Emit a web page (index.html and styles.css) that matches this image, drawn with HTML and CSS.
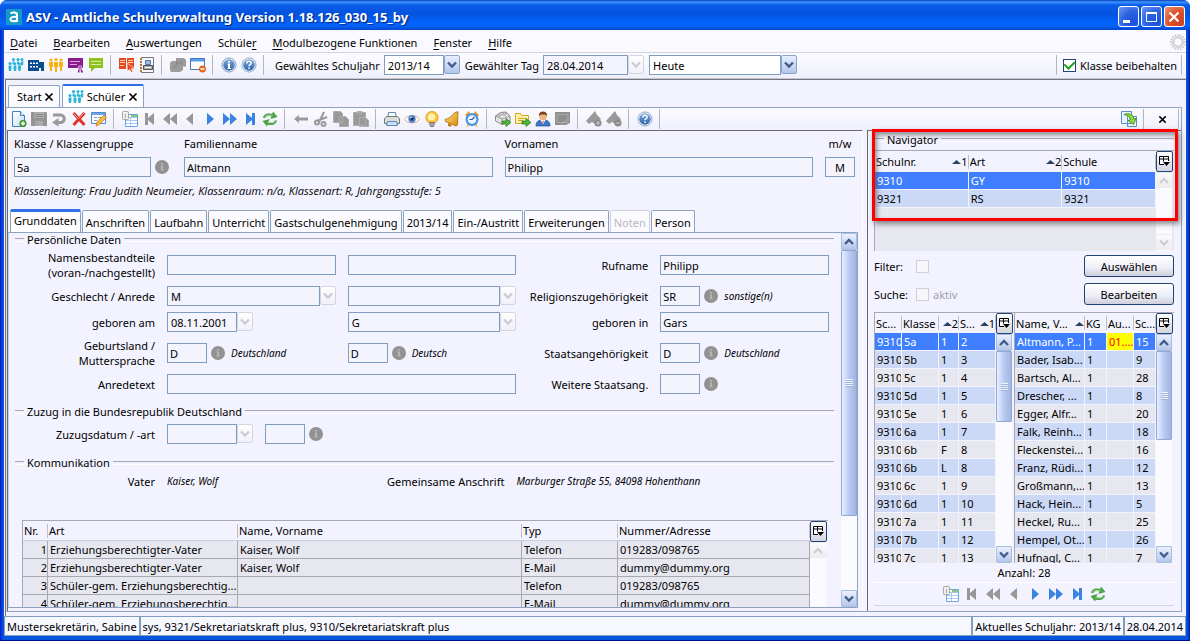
FILE: index.html
```html
<!DOCTYPE html>
<html lang="de">
<head>
<meta charset="utf-8">
<title>ASV - Amtliche Schulverwaltung</title>
<link rel="stylesheet" href="styles.css">
</head>
<body>
<svg class="defs" aria-hidden="true">
  <defs>
    <linearGradient id="badge" x1="0" y1="0" x2="0" y2="1"><stop offset="0" stop-color="#7fa9da"/><stop offset="1" stop-color="#2c62a8"/></linearGradient>
    <linearGradient id="gold" x1="0" y1="0" x2="1" y2="1"><stop offset="0" stop-color="#ffe27a"/><stop offset="1" stop-color="#d98a10"/></linearGradient>
    <linearGradient id="paper" x1="0" y1="0" x2="1" y2="1"><stop offset="0" stop-color="#fff"/><stop offset="1" stop-color="#c4ddf5"/></linearGradient>
  </defs>
  <symbol id="people" viewBox="0 0 16 16"><g fill="currentColor"><circle cx="5.500" cy="2.500" r="1.500"/><circle cx="10" cy="2.500" r="1.500"/><circle cx="14" cy="2.500" r="1.500"/><path d="M4.500 4.500h2v3h-2zM9 4.500h2v3H9zM13 4.500h2.500l-.5 4h-2z"/><circle cx="2" cy="6.500" r="1.500"/><circle cx="7" cy="6.800" r="1.400"/><circle cx="11.500" cy="6.800" r="1.400"/><path d="M.5 8.500h3V11L3 14H1L.5 11zM5.500 8.500h3V11L8 14H6l-.5-3zM10 8.500h3V11l-.5 3h-2l-.5-3z"/></g></symbol>
  <symbol id="crowd" viewBox="0 0 16 16"><g fill="#f5b414"><circle cx="3" cy="3" r="1.600"/><circle cx="8" cy="2.500" r="1.600"/><circle cx="13" cy="3" r="1.600"/><path d="M1 5h4v5H4v4H2v-4H1zM6 5h4v5H9v5H7v-5H6zM11 5h4v5h-1v4h-2v-4h-1z"/></g></symbol>
  <symbol id="school" viewBox="0 0 16 16"><path fill="#0b4b8f" d="M0 3h11v2h5v9h-3v-3h-2v3H0z"/><path fill="#fff" d="M2 5.500h2v1.500H2zM5 5.500h2v1.500H5zM8 5.500h2v1.500H8zM2 9h2v1.500H2zM5 9h2v1.500H5zM8 9h2v1.500H8z"/></symbol>
  <symbol id="note" viewBox="0 0 16 16"><path fill="#8c1a8c" d="M0 1h15v10H0z"/><path stroke="#d9a6d9" d="M2 4.500h10M2 7.500h7"/><circle cx="12" cy="10.500" r="2" fill="#b45fb4" stroke="#e8cbe8" stroke-width=".6"/><path fill="#8c1a8c" d="M10 12.500h1.500v3H10zM12.500 12.500H14l1 3h-2z"/></symbol>
  <symbol id="speech" viewBox="0 0 16 16"><path fill="#8dc21f" d="M1 1h14v10H7l-4 4v-4H1z"/><path stroke="#d8efa8" d="M3 4.500h10M3 7.500h10"/></symbol>
  <symbol id="book" viewBox="0 0 16 16"><path fill="#e44a1e" d="M0 1h7v11H0zM8 1h7v11H8z"/><path stroke="#ffd0b8" d="M1 3.500h5M1 5.500h5M1 8.500h4M9 3.500h5M9 5.500h5"/><path fill="#e44a1e" stroke="#fff" stroke-width=".6" d="M8 6l7 5-3 .5 2 3-1.500 1-2-3-2 2z"/></symbol>
  <symbol id="binder" viewBox="0 0 16 16"><path fill="#f8f8f8" stroke="#777" d="M2.500.5h12v15h-12z"/><path fill="#b07a3a" d="M1 1h2v14H1z"/><path stroke="#eee" d="M0 3.500h3M0 6.500h3M0 9.500h3M0 12.500h3"/><path fill="#9dbbe6" stroke="#5577aa" d="M6.500 3.500h5v4h-5z"/><path fill="#aaa" stroke="#555" d="M4.500 8.500h9v4h-9z"/><path stroke="#fff" d="M6 10.500h6"/></symbol>
  <symbol id="pages" viewBox="0 0 16 16"><path fill="#9b9b9b" d="M6 1h8l2 2v6l-2 1-1-1v4l-3 2H1l-1-2V6l2-2h4z"/><path stroke="#858585" fill="none" d="M6 6h7M7 4v4l-4 3M10 3l3 3"/></symbol>
  <symbol id="winminus" viewBox="0 0 16 16"><path fill="#fff" stroke="#3c7ac8" d="M.5 1.500h14v11H.5z"/><path fill="#5d9be6" d="M1 2h13v2.500H1z"/><circle cx="12.500" cy="12" r="3.500" fill="#e8681b"/><path stroke="#fff" stroke-width="1.400" d="M10.500 12h4"/></symbol>
  <symbol id="info" viewBox="0 0 16 16"><circle cx="8" cy="8" r="7" fill="#fff" stroke="#7d9cc4"/><circle cx="8" cy="8" r="5.800" fill="url(#badge)"/><path fill="#fff" d="M7 4h2v1.600H7zM6.500 6.500H9V11h1v1H6.500v-1H7V7.500h-.5z"/></symbol>
  <symbol id="help" viewBox="0 0 16 16"><circle cx="8" cy="8" r="7" fill="#fff" stroke="#8aa8cf"/><circle cx="8" cy="8" r="5.800" fill="url(#badge)"/><path fill="none" stroke="#fff" stroke-width="1.500" d="M5.800 6.500C5.800 3.500 10.300 3.800 10.200 6.200 10.100 7.600 8 7.700 8 9.300"/><path fill="#fff" d="M7.200 10.500h1.600v1.500H7.200z"/></symbol>
  <symbol id="infogray" viewBox="0 0 14 14"><circle cx="7" cy="7" r="7" fill="#929292"/><path fill="#b5b5b5" d="M6 3h2v1.500H6zM5.500 5.500H8v4h1v1H5.500v-1H6v-3h-.5z"/></symbol>
  <symbol id="newdoc" viewBox="0 0 16 16"><path fill="url(#paper)" stroke="#3f7fc0" d="M1.500.5h8l4 4v11h-12z"/><path fill="#e6f3ff" stroke="#3f7fc0" d="M9.500.5v4h4"/><circle cx="12" cy="12.500" r="3.300" fill="#49a535" stroke="#2d7a20" stroke-width=".6"/><path stroke="#fff" stroke-width="1.300" d="M12 10.500v4M10 12.500h4"/></symbol>
  <symbol id="save" viewBox="0 0 16 16"><path fill="#949494" d="M0 1h15l1 1v13H0z"/><path fill="#adadad" d="M3 1h10v6H3zM4 10h8v5H4z"/><path stroke="#8a8a8a" d="M4 3.500h8M4 5.500h8M6 11v3"/></symbol>
  <symbol id="undo" viewBox="0 0 16 16"><path fill="none" stroke="#999" stroke-width="3" d="M2 4h7.500a3.700 3.700 0 0 1 0 7.500H6"/><path fill="#999" d="M7.500 7v8.500L1 11.500z"/></symbol>
  <symbol id="delete" viewBox="0 0 16 16"><path stroke="#e0332e" stroke-width="3" d="M2.500 2l11 12M13.500 2l-11 12"/><path stroke="#f9928c" d="M2.500 2.500l5 5M13 2L8 7"/></symbol>
  <symbol id="edit" viewBox="0 0 16 16"><path fill="#fff" stroke="#4d87cc" d="M.5 1.500h14v11H.5z"/><path fill="#6ea5e6" d="M1 2h13v2H1z"/><path stroke="#7f9cc0" d="M3 6.500h3M3 9.500h3M7 6.500h5"/><path fill="#f6b83d" stroke="#b9761a" stroke-width=".7" d="M5 15l1-4 7-7 2.500 2.500-7 7z"/></symbol>
  <symbol id="list" viewBox="0 0 16 16"><path fill="#fff" stroke="#6fa4d8" d="M3.500 3.500h12v12h-12z"/><path stroke="#a6c8ea" d="M4 6.500h11M4 9.500h11M4 12.500h11M8.500 6v9"/><path stroke="#8cc878" stroke-width="2" d="M9 5h6"/><rect x=".5" y=".5" width="6" height="8" rx="1" fill="#eee" stroke="#a5a5a5"/><path stroke="#aaa" d="M3.500 3v4"/></symbol>
  <symbol id="first" viewBox="0 0 16 16"><path fill="currentColor" d="M3 2h3v5l6-5v12L6 9v5H3z"/></symbol>
  <symbol id="last" viewBox="0 0 16 16"><path fill="currentColor" d="M13 2h-3v5L4 2v12l6-5v5h3z"/></symbol>
  <symbol id="rew" viewBox="0 0 16 16"><path fill="currentColor" d="M8 2v12L1 8zM15 2v12L8 8z"/></symbol>
  <symbol id="ff" viewBox="0 0 16 16"><path fill="currentColor" d="M8 2v12l7-6zM1 2v12l7-6z"/></symbol>
  <symbol id="prev" viewBox="0 0 16 16"><path fill="currentColor" d="M11 2v12L4 8z"/></symbol>
  <symbol id="next" viewBox="0 0 16 16"><path fill="currentColor" d="M5 2v12l7-6z"/></symbol>
  <symbol id="refresh" viewBox="0 0 16 16"><path fill="none" stroke="#4aa345" stroke-width="2.600" d="M2 7c1-3.500 5-4 9-2.500M14 9.500c-1 3.500-5 4-9 2.500"/><path fill="#4aa345" d="M11 .5l4.500 5.500-7 2zM5 15.500L.5 10l7-2z"/><path fill="none" stroke="#b9e5b0" stroke-width=".9" d="M2.500 6.500C4 4 8 4.200 10.500 5M13.500 9.800c-1.500 2.500-5.500 2.200-8 1.400"/></symbol>
  <symbol id="back" viewBox="0 0 16 16"><path fill="#999" d="M1 8l5-4v2.500h9v3H6V12z"/></symbol>
  <symbol id="cut" viewBox="0 0 16 16"><path stroke="#999" stroke-width="2" d="M11 1L6 11M14 6L4 10"/><g fill="none" stroke="#999" stroke-width="2"><circle cx="4" cy="11.500" r="2"/><circle cx="10.500" cy="13" r="2"/></g></symbol>
  <symbol id="copy" viewBox="0 0 16 16"><path fill="#999" stroke="#adadad" d="M.5.5h7l2 2v9h-9zM6.500 5.500h6l3 3v7h-9z"/></symbol>
  <symbol id="paste" viewBox="0 0 16 16"><path fill="#999" stroke="#adadad" d="M.5 1.500h12v13H.5zM4 .5h5v3H4zM6.500 6.500h6l3 3v6h-9z"/></symbol>
  <symbol id="print" viewBox="0 0 16 16"><path fill="#fff" stroke="#5c87b5" d="M4.500 1.500h7l1 6h-9z"/><path fill="#dcdcdc" stroke="#777" d="M.5 7.500l2-2h11l2 2v5H.5z"/><path fill="#c9e0fa" stroke="#5c87b5" d="M3.500 10.500h9l1 4h-11z"/></symbol>
  <symbol id="eye" viewBox="0 0 16 16"><path fill="#fff" stroke="#dda888" d="M.5 8.500C4 3 12 3 15.500 8.500 12 13 4 13 .5 8.500z"/><circle cx="8" cy="8" r="3.700" fill="#4d86cf"/><circle cx="8" cy="8" r="1.700" fill="#15305c"/><circle cx="7" cy="6.500" r=".8" fill="#fff"/></symbol>
  <symbol id="bulb" viewBox="0 0 16 16"><circle cx="8" cy="6.500" r="6" fill="#ffc83d" stroke="#e09d28"/><circle cx="7.500" cy="6" r="3.500" fill="#fff3b5"/><path fill="#aaa" stroke="#777" d="M5.500 11.500h5l-1 4h-3z"/></symbol>
  <symbol id="bell" viewBox="0 0 16 16"><path fill="url(#gold)" stroke="#a8680c" stroke-width=".8" d="M14 .8C11 1 10 2 8 4.500 6 7 4 7.500 1 8.500l.5 2L12 15l1.500-1z"/><path fill="#c9790f" d="M4 12l4 2-1.500 1.800L4 15z"/></symbol>
  <symbol id="clock" viewBox="0 0 16 16"><path fill="#e09a2d" d="M1 4l4-4 1 3-3 3zM15 4l-4-4-1 3 3 3zM3 13l2 1-2 2zM13 13l-2 1 2 2z"/><circle cx="8" cy="8.500" r="6.500" fill="#4b93da"/><circle cx="8" cy="8.500" r="4.300" fill="#eef7ff"/><path fill="none" stroke="#2a5d99" stroke-width="1.200" d="M10.500 6L8 8.500H5.500"/></symbol>
  <symbol id="export" viewBox="0 0 16 16"><path fill="#e4e4e4" stroke="#8c8c8c" d="M.5 5l5-3.500L11 1l4 4v5l-8 3.500L.5 10z"/><path stroke="#999" fill="none" d="M.5 5L7 8l8-3M7 8v5"/><path fill="#fff" stroke="#999" d="M3 3h3v2H3zM8 2h3v2H8z"/><path fill="#4fb53a" stroke="#27771a" stroke-width=".7" d="M7 10h4V7.500l5 4-5 4V13H7z"/></symbol>
  <symbol id="folder" viewBox="0 0 16 16"><path fill="#fff1a8" stroke="#d9a520" d="M.5 2.500h5l1 2h7v8H.5z"/><path stroke="#d9a520" d="M3 7.500h8M3 9.500h5"/><path fill="#4fb53a" stroke="#27771a" stroke-width=".7" d="M7 10h4V7.500l5 4-5 4V13H7z"/></symbol>
  <symbol id="person" viewBox="0 0 16 16"><path fill="#3c77c9" stroke="#214f94" stroke-width=".7" d="M1 15c0-5 3-6 7-6s7 1 7 6z"/><path fill="#fff" d="M5.500 9h5L8 13.500z"/><path fill="#c6372e" d="M7.300 10h1.400L8 14z"/><circle cx="8" cy="5.500" r="3.700" fill="#eeb583"/><path fill="#7a4316" d="M3.800 5C3.500-1 12.500-1 12.200 5L10 3.500H6z"/></symbol>
  <symbol id="editgray" viewBox="0 0 16 16"><path fill="#8f8f8f" d="M0 1h15v11l-4 2H0z"/><path stroke="#aaa" fill="none" d="M2 3.500h11v8H2zM6 14l8-8"/></symbol>
  <symbol id="tagplus" viewBox="0 0 16 16"><path fill="#999" d="M0 10L9 0l2 4 4 4-2 2-4 3-3-2-3 2z"/><circle cx="12" cy="12" r="3.500" fill="#8a8a8a"/><path stroke="#ccc" d="M10 12h4M12 10v4"/></symbol>
  <symbol id="tagminus" viewBox="0 0 16 16"><path fill="#999" d="M0 10L9 0l2 4 4 4-2 2-4 3-3-2-3 2z"/><circle cx="12" cy="12" r="3.500" fill="#8a8a8a"/><path stroke="#ccc" d="M10 12h4"/></symbol>
  <symbol id="swap" viewBox="0 0 16 16"><path fill="#e8f3ff" stroke="#5b8fc7" d="M.5.500h10v12H.500zM6.500 5.500h9v10h-9z"/><path fill="#8fdc3c" stroke="#2f7d14" stroke-width=".8" d="M3 3.500C8 1.500 12.500 3.500 12.800 8L15 7.500l-2.500 6-5.500-4 2.500-.8C9 6 7 4.500 3 3.500z"/></symbol>
  <symbol id="x" viewBox="0 0 10 10"><path stroke="#000" stroke-width="1.700" d="M1.500 1.500l7 7M8.500 1.500l-7 7"/></symbol>
  <symbol id="down" viewBox="0 0 10 8"><path fill="none" stroke="currentColor" stroke-width="2.400" d="M1 1.500l4 4 4-4"/></symbol>
  <symbol id="up" viewBox="0 0 10 8"><path fill="none" stroke="currentColor" stroke-width="2.400" d="M1 6l4-4 4 4"/></symbol>
  <symbol id="sort" viewBox="0 0 9 5"><path fill="#29435e" d="M0 5l4.500-4L9 5z"/></symbol>
  <symbol id="cols" viewBox="0 0 11 11"><path fill="#fff" stroke="#000" d="M9.500 5V.5h-9v8H5M.5 3h9M4.500.5v5"/><path fill="#000" d="M4 6h7l-3.500 4z"/></symbol>
  <symbol id="spin" viewBox="0 0 16 16"><g stroke="#c8c8c8" stroke-width="1.300"><path d="M8 0v4.500M8 11.500V16M0 8h4.500M11.500 8H16M2.300 2.300l3.200 3.200M10.500 10.500l3.200 3.200M13.700 2.300l-3.200 3.200M5.500 10.500l-3.200 3.200M5 .6l1.700 4M9.300 11.400l1.700 4M11 .6l-1.700 4M6.700 11.400l-1.700 4M.6 5l4 1.700M11.400 9.300l4 1.700M.6 11l4-1.700M11.400 6.700l4-1.700"/></g></symbol>
</svg>

<div class="window">
  <header class="titlebar">
    <svg class="logo" viewBox="0 0 16 16"><rect width="16" height="16" fill="#1599c6"/><path fill="none" stroke="#fff" stroke-width="2" d="M4.500 4.500c2-1.500 6.500-1.500 6.500 1.500v7M11 8C7 7.500 4.500 8 4.500 10.200S9 13 11 11"/></svg>
    <h1>ASV - Amtliche Schulverwaltung Version 1.18.126_030_15_by</h1>
    <button class="winbtn" aria-label="Minimieren"><svg viewBox="0 0 18 18"><path stroke="#fff" stroke-width="3" d="M4 13.500h7"/></svg></button>
    <button class="winbtn" aria-label="Maximieren"><svg viewBox="0 0 18 18"><path fill="none" stroke="#fff" d="M4.500 4.500h10v9h-10z"/><path stroke="#fff" stroke-width="2" d="M4 5h11"/></svg></button>
    <button class="winbtn close" aria-label="Schließen"><svg viewBox="0 0 18 18"><path stroke="#fff" stroke-width="2.200" d="M4.500 4.500l9 9M13.500 4.500l-9 9"/></svg></button>
  </header>

  <div class="client">
    <nav class="menubar">
      <a href="#"><u>D</u>atei</a><a href="#"><u>B</u>earbeiten</a><a href="#"><u>A</u>uswertungen</a><a href="#">Schüle<u>r</u></a><a href="#"><u>M</u>odulbezogene Funktionen</a><a href="#"><u>F</u>enster</a><a href="#"><u>H</u>ilfe</a>
      <svg class="icon spinner"><use href="#spin"/></svg>
    </nav>

    <div class="toolbar main-tools">
      <button class="tool cyan" aria-label="Schüler"><svg class="icon"><use href="#people"/></svg></button>
      <button class="tool" aria-label="Schule"><svg class="icon"><use href="#school"/></svg></button>
      <button class="tool" aria-label="Klassen"><svg class="icon"><use href="#crowd"/></svg></button>
      <button class="tool" aria-label="Lehrer"><svg class="icon"><use href="#note"/></svg></button>
      <button class="tool" aria-label="Unterricht"><svg class="icon"><use href="#speech"/></svg></button>
      <i class="sep"></i>
      <button class="tool" aria-label="Berichte"><svg class="icon"><use href="#book"/></svg></button>
      <button class="tool" aria-label="Drucken"><svg class="icon"><use href="#binder"/></svg></button>
      <i class="sep"></i>
      <button class="tool" aria-label="Fenster"><svg class="icon"><use href="#pages"/></svg></button>
      <button class="tool" aria-label="Fenster schließen"><svg class="icon"><use href="#winminus"/></svg></button>
      <i class="sep"></i>
      <button class="tool" aria-label="Info"><svg class="icon"><use href="#info"/></svg></button>
      <button class="tool" aria-label="Hilfe"><svg class="icon"><use href="#help"/></svg></button>
      <i class="sep"></i>
      <label class="tool-label" for="year">Gewähltes Schuljahr</label>
      <span class="combo active year"><select id="year"><option>2013/14</option></select><span class="arrow"><svg><use href="#down"/></svg></span></span>
      <label class="tool-label" for="day">Gewählter Tag</label>
      <span class="combo day"><input id="day" value="28.04.2014" readonly><button class="arrow" aria-label="Tag wählen" disabled><svg><use href="#down"/></svg></button></span>
      <span class="combo active today"><select aria-label="Tag"><option>Heute</option></select><span class="arrow"><svg><use href="#down"/></svg></span></span>
      <span class="grow"></span>
      <i class="sep"></i>
      <label class="keep"><input type="checkbox" class="check" checked>Klasse beibehalten</label>
      <i class="sep"></i>
    </div>

    <main class="workspace">
      <div class="doc-tabs">
        <button class="doc-tab">Start<svg><use href="#x"/></svg></button>
        <button class="doc-tab current"><svg class="icon cyan"><use href="#people"/></svg>Schüler<svg><use href="#x"/></svg></button>
      </div>
      <div class="frame">
        <div class="toolbar sub-tools">
          <button class="tool" aria-label="Neu"><svg class="icon"><use href="#newdoc"/></svg></button>
          <button class="tool" aria-label="Speichern"><svg class="icon"><use href="#save"/></svg></button>
          <button class="tool" aria-label="Rückgängig"><svg class="icon"><use href="#undo"/></svg></button>
          <button class="tool" aria-label="Löschen"><svg class="icon"><use href="#delete"/></svg></button>
          <button class="tool" aria-label="Ändern"><svg class="icon"><use href="#edit"/></svg></button>
          <i class="sep"></i>
          <button class="tool" aria-label="Liste"><svg class="icon"><use href="#list"/></svg></button>
          <button class="tool gray" aria-label="Erster"><svg class="icon"><use href="#first"/></svg></button>
          <button class="tool gray" aria-label="Seite zurück"><svg class="icon"><use href="#rew"/></svg></button>
          <button class="tool gray" aria-label="Zurück"><svg class="icon"><use href="#prev"/></svg></button>
          <button class="tool blue" aria-label="Weiter"><svg class="icon"><use href="#next"/></svg></button>
          <button class="tool blue" aria-label="Seite vor"><svg class="icon"><use href="#ff"/></svg></button>
          <button class="tool blue" aria-label="Letzter"><svg class="icon"><use href="#last"/></svg></button>
          <button class="tool" aria-label="Aktualisieren"><svg class="icon"><use href="#refresh"/></svg></button>
          <i class="sep"></i>
          <button class="tool" aria-label="Voriges"><svg class="icon"><use href="#back"/></svg></button>
          <button class="tool" aria-label="Ausschneiden"><svg class="icon"><use href="#cut"/></svg></button>
          <button class="tool" aria-label="Kopieren"><svg class="icon"><use href="#copy"/></svg></button>
          <button class="tool" aria-label="Einfügen"><svg class="icon"><use href="#paste"/></svg></button>
          <i class="sep"></i>
          <button class="tool" aria-label="Drucken"><svg class="icon"><use href="#print"/></svg></button>
          <button class="tool" aria-label="Vorschau"><svg class="icon"><use href="#eye"/></svg></button>
          <button class="tool" aria-label="Hinweis"><svg class="icon"><use href="#bulb"/></svg></button>
          <button class="tool" aria-label="Erinnerung"><svg class="icon"><use href="#bell"/></svg></button>
          <button class="tool" aria-label="Wecker"><svg class="icon"><use href="#clock"/></svg></button>
          <i class="sep"></i>
          <button class="tool" aria-label="Export"><svg class="icon"><use href="#export"/></svg></button>
          <button class="tool" aria-label="Ordner"><svg class="icon"><use href="#folder"/></svg></button>
          <button class="tool" aria-label="Person"><svg class="icon"><use href="#person"/></svg></button>
          <button class="tool" aria-label="Bearbeiten"><svg class="icon"><use href="#editgray"/></svg></button>
          <i class="sep"></i>
          <button class="tool" aria-label="Merkmal hinzufügen"><svg class="icon"><use href="#tagplus"/></svg></button>
          <button class="tool" aria-label="Merkmal entfernen"><svg class="icon"><use href="#tagminus"/></svg></button>
          <i class="sep"></i>
          <button class="tool" aria-label="Hilfe"><svg class="icon"><use href="#help"/></svg></button>
          <i class="sep"></i>
          <span class="grow"></span>
          <button class="tool" aria-label="Wechseln"><svg class="icon"><use href="#swap"/></svg></button>
          <i class="sep"></i>
          <button class="tool close-doc" aria-label="Schließen"><svg><use href="#x"/></svg></button>
          <i class="sep"></i>
        </div>

        <div class="split">
          <section class="editor">
            <div class="student">
              <div class="field"><label for="klasse">Klasse / Klassengruppe</label><span class="with-info class-box"><input class="box grow" id="klasse" value="5a" readonly><svg class="info"><use href="#infogray"/></svg></span></div>
              <div class="field"><label for="fam">Familienname</label><input class="box" id="fam" value="Altmann" readonly></div>
              <div class="field"><label for="vor">Vornamen</label><input class="box" id="vor" value="Philipp" readonly></div>
              <div class="field sex"><label for="mw">m/w</label><input class="box" id="mw" value="M" readonly></div>
            </div>
            <p class="class-note">Klassenleitung: Frau Judith Neumeier, Klassenraum: n/a, Klassenart: R, Jahrgangsstufe: 5</p>
            <div class="tabs">
              <button class="tab current">Grunddaten</button><button class="tab">Anschriften</button><button class="tab">Laufbahn</button><button class="tab">Unterricht</button><button class="tab">Gastschulgenehmigung</button><button class="tab">2013/14</button><button class="tab">Ein-/Austritt</button><button class="tab">Erweiterungen</button><button class="tab" disabled>Noten</button><button class="tab">Person</button>
            </div>
            <div class="tab-panel">
              <div class="sheet">
                <h2 class="legend">Persönliche Daten</h2>
                <div class="form">
                  <label for="n1">Namensbestandteile<br>(voran-/nachgestellt)</label>
                  <input class="box" id="n1" readonly>
                  <input class="box" aria-label="Namensbestandteil nachgestellt" readonly>
                  <label for="ruf">Rufname</label>
                  <input class="box" id="ruf" value="Philipp" readonly>

                  <label for="sex">Geschlecht / Anrede</label>
                  <span class="combo"><select id="sex" disabled><option>M</option></select><span class="arrow"><svg><use href="#down"/></svg></span></span>
                  <span class="combo"><select aria-label="Anrede" disabled><option></option></select><span class="arrow"><svg><use href="#down"/></svg></span></span>
                  <label for="rel">Religionszugehörigkeit</label>
                  <span class="with-info"><input class="box code" id="rel" value="SR" readonly><svg class="info"><use href="#infogray"/></svg><em>sonstige(n)</em></span>

                  <label for="geb">geboren am</label>
                  <span class="combo date"><input id="geb" value="08.11.2001" readonly><button class="arrow" aria-label="Datum wählen" disabled><svg><use href="#down"/></svg></button></span>
                  <span class="combo"><select aria-label="Geburtsstatus" disabled><option>G</option></select><span class="arrow"><svg><use href="#down"/></svg></span></span>
                  <label for="ort">geboren in</label>
                  <input class="box" id="ort" value="Gars" readonly>

                  <label for="land">Geburtsland /<br>Muttersprache</label>
                  <span class="with-info"><input class="box code" id="land" value="D" readonly><svg class="info"><use href="#infogray"/></svg><em>Deutschland</em></span>
                  <span class="with-info"><input class="box code" aria-label="Muttersprache" value="D" readonly><svg class="info"><use href="#infogray"/></svg><em>Deutsch</em></span>
                  <label for="staat">Staatsangehörigkeit</label>
                  <span class="with-info"><input class="box code" id="staat" value="D" readonly><svg class="info"><use href="#infogray"/></svg><em>Deutschland</em></span>

                  <label for="anr">Anredetext</label>
                  <input class="box wide" id="anr" readonly>
                  <label for="staat2">Weitere Staatsang.</label>
                  <span class="with-info"><input class="box code" id="staat2" readonly><svg class="info"><use href="#infogray"/></svg></span>
                </div>

                <h2 class="legend">Zuzug in die Bundesrepublik Deutschland</h2>
                <div class="form arrival">
                  <label for="zuzug">Zuzugsdatum / -art</label>
                  <span class="with-info wide"><span class="combo date"><input id="zuzug" readonly><button class="arrow" aria-label="Datum wählen" disabled><svg><use href="#down"/></svg></button></span><input class="box code second" aria-label="Zuzugsart" readonly><svg class="info"><use href="#infogray"/></svg></span>
                </div>

                <h2 class="legend">Kommunikation</h2>
                <div class="contact">
                  <span>Vater</span><em>Kaiser, Wolf</em><span>Gemeinsame Anschrift</span><em>Marburger Straße 55, 84098 Hohenthann</em>
                </div>

                <div class="grid-box contacts">
                  <table class="grid lined">
                    <colgroup><col class="c-nr"><col class="c-art"><col class="c-name"><col class="c-typ"><col class="c-adr"></colgroup>
                    <thead><tr><th>Nr.</th><th>Art</th><th>Name, Vorname</th><th>Typ</th><th>Nummer/Adresse</th></tr></thead>
                    <tbody>
                      <tr><td>1</td><td>Erziehungsberechtigter-Vater</td><td>Kaiser, Wolf</td><td>Telefon</td><td>019283/098765</td></tr>
                      <tr><td>2</td><td>Erziehungsberechtigter-Vater</td><td>Kaiser, Wolf</td><td>E-Mail</td><td>dummy@dummy.org</td></tr>
                      <tr><td>3</td><td>Schüler-gem. Erziehungsberechtig...</td><td></td><td>Telefon</td><td>019283/098765</td></tr>
                      <tr><td>4</td><td>Schüler-gem. Erziehungsberechtig...</td><td></td><td>E-Mail</td><td>dummy@dummy.org</td></tr>
                    </tbody>
                  </table>
                  <div class="side"><button class="cols" aria-label="Spalten"><svg><use href="#cols"/></svg></button><div class="scroll off"><button class="sb" aria-label="Nach oben"><svg><use href="#up"/></svg></button></div></div>
                </div>
              </div>
              <div class="scroll page-scroll"><button class="sb" aria-label="Nach oben"><svg><use href="#up"/></svg></button><span class="thumb"></span><button class="sb" aria-label="Nach unten"><svg><use href="#down"/></svg></button></div>
            </div>
          </section>

          <aside class="navigator">
            <h2 class="legend">Navigator</h2>
            <div class="grid-box schools">
              <table class="grid striped">
                <colgroup><col><col><col></colgroup>
                <thead><tr><th><span class="hd">Schulnr.<b><svg><use href="#sort"/></svg>1</b></span></th><th><span class="hd">Art<b><svg><use href="#sort"/></svg>2</b></span></th><th>Schule</th></tr></thead>
                <tbody>
                  <tr class="selected"><td>9310</td><td>GY</td><td>9310</td></tr>
                  <tr><td>9321</td><td>RS</td><td>9321</td></tr>
                </tbody>
              </table>
              <div class="side"><button class="cols" aria-label="Spalten"><svg><use href="#cols"/></svg></button><div class="scroll off"><button class="sb" aria-label="Nach oben"><svg><use href="#up"/></svg></button><button class="sb" aria-label="Nach unten"><svg><use href="#down"/></svg></button></div></div>
            </div>
            <div class="filter"><label for="flt">Filter:</label><input type="checkbox" class="check" id="flt" disabled><button class="push">Auswählen</button></div>
            <div class="filter"><label for="such">Suche:</label><input type="checkbox" class="check" id="such" disabled><span class="dim">aktiv</span><button class="push">Bearbeiten</button></div>

            <div class="lists">
              <div class="grid-box classes">
                <table class="grid striped">
                  <colgroup><col class="k1"><col class="k2"><col class="k3"><col class="k4"></colgroup>
                  <thead><tr><th>Sc...</th><th>Klasse</th><th><span class="hd"><b><svg><use href="#sort"/></svg>2</b></span></th><th><span class="hd">S...<b><svg><use href="#sort"/></svg>1</b></span></th></tr></thead>
                  <tbody>
                    <tr class="selected"><td>9310</td><td>5a</td><td>1</td><td>2</td></tr>
                    <tr><td>9310</td><td>5b</td><td>1</td><td>3</td></tr>
                    <tr><td>9310</td><td>5c</td><td>1</td><td>4</td></tr>
                    <tr><td>9310</td><td>5d</td><td>1</td><td>5</td></tr>
                    <tr><td>9310</td><td>5e</td><td>1</td><td>6</td></tr>
                    <tr><td>9310</td><td>6a</td><td>1</td><td>7</td></tr>
                    <tr><td>9310</td><td>6b</td><td>F</td><td>8</td></tr>
                    <tr><td>9310</td><td>6b</td><td>L</td><td>8</td></tr>
                    <tr><td>9310</td><td>6c</td><td>1</td><td>9</td></tr>
                    <tr><td>9310</td><td>6d</td><td>1</td><td>10</td></tr>
                    <tr><td>9310</td><td>7a</td><td>1</td><td>11</td></tr>
                    <tr><td>9310</td><td>7b</td><td>1</td><td>12</td></tr>
                    <tr><td>9310</td><td>7c</td><td>1</td><td>13</td></tr>
                  </tbody>
                </table>
                <div class="side"><button class="cols" aria-label="Spalten"><svg><use href="#cols"/></svg></button><div class="scroll"><button class="sb" aria-label="Nach oben"><svg><use href="#up"/></svg></button><span class="thumb short"></span><button class="sb" aria-label="Nach unten"><svg><use href="#down"/></svg></button></div></div>
              </div>
              <div class="grid-box pupils">
                <table class="grid striped">
                  <colgroup><col class="p1"><col class="p2"><col class="p3"><col class="p4"></colgroup>
                  <thead><tr><th><span class="hd">Name, V...<b><svg><use href="#sort"/></svg></b></span></th><th>KG</th><th>Au...</th><th>Sc...</th></tr></thead>
                  <tbody>
                    <tr class="selected"><td>Altmann, P...</td><td>1</td><td class="alert">01....</td><td>15</td></tr>
                    <tr><td>Bader, Isab...</td><td>1</td><td></td><td>9</td></tr>
                    <tr><td>Bartsch, Al...</td><td>1</td><td></td><td>28</td></tr>
                    <tr><td>Drescher, ...</td><td>1</td><td></td><td>8</td></tr>
                    <tr><td>Egger, Alfr...</td><td>1</td><td></td><td>20</td></tr>
                    <tr><td>Falk, Reinh...</td><td>1</td><td></td><td>18</td></tr>
                    <tr><td>Fleckenstei...</td><td>1</td><td></td><td>16</td></tr>
                    <tr><td>Franz, Rüdi...</td><td>1</td><td></td><td>12</td></tr>
                    <tr><td>Großmann,...</td><td>1</td><td></td><td>13</td></tr>
                    <tr><td>Hack, Hein...</td><td>1</td><td></td><td>5</td></tr>
                    <tr><td>Heckel, Ru...</td><td>1</td><td></td><td>25</td></tr>
                    <tr><td>Hempel, Ot...</td><td>1</td><td></td><td>26</td></tr>
                    <tr><td>Hufnagl, C...</td><td>1</td><td></td><td>7</td></tr>
                  </tbody>
                </table>
                <div class="side"><button class="cols" aria-label="Spalten"><svg><use href="#cols"/></svg></button><div class="scroll"><button class="sb" aria-label="Nach oben"><svg><use href="#up"/></svg></button><span class="thumb tall"></span><button class="sb" aria-label="Nach unten"><svg><use href="#down"/></svg></button></div></div>
              </div>
            </div>
            <p class="count">Anzahl: 28</p>
            <div class="pager">
              <button class="tool" aria-label="Liste"><svg class="icon"><use href="#list"/></svg></button>
              <button class="tool gray" aria-label="Erster"><svg class="icon"><use href="#first"/></svg></button>
              <button class="tool gray" aria-label="Seite zurück"><svg class="icon"><use href="#rew"/></svg></button>
              <button class="tool gray" aria-label="Zurück"><svg class="icon"><use href="#prev"/></svg></button>
              <button class="tool blue" aria-label="Weiter"><svg class="icon"><use href="#next"/></svg></button>
              <button class="tool blue" aria-label="Seite vor"><svg class="icon"><use href="#ff"/></svg></button>
              <button class="tool blue" aria-label="Letzter"><svg class="icon"><use href="#last"/></svg></button>
              <button class="tool" aria-label="Aktualisieren"><svg class="icon"><use href="#refresh"/></svg></button>
            </div>
            <div class="highlight"></div>
          </aside>
        </div>
      </div>
    </main>

    <footer class="status">
      <span>Mustersekretärin, Sabine</span><span class="grow">sys, 9321/Sekretariatskraft plus, 9310/Sekretariatskraft plus</span><span>Aktuelles Schuljahr: 2013/14</span><span>28.04.2014</span>
    </footer>
  </div>
</div>
</body>
</html>
```
FILE: styles.css
```css
* { box-sizing: border-box; }
body { margin: 0; background: #fff; color: #000; font: 11px/15px "Noto Sans", "Open Sans", sans-serif; }
button, input, select { font: inherit; color: inherit; margin: 0; padding: 0; border: 0; background: none; border-radius: 0; }
h1, h2, p { margin: 0; font-weight: normal; }
svg { display: block; flex: none; }
.defs { position: absolute; width: 0; height: 0; }
.grow { flex: 1; min-width: 0; }
.icon { width: 16px; height: 16px; }
.cyan { color: #2cb4d8; }
.gray { color: #979797; }
.blue { color: #3b83e0; }

/* window chrome */
.window { height: 100vh; display: flex; flex-direction: column; padding: 0 4px 4px; border-radius: 7px 7px 0 0; overflow: hidden; background: linear-gradient(90deg, #0019cf, #0855dd 3px, #0855dd calc(100% - 3px), #0019a0); border-bottom: 1px solid #00138c; }
.titlebar { flex: none; height: 30px; margin: 0 -4px; padding: 3px 5px 0 6px; display: flex; align-items: center; background: linear-gradient(#0540b8, #3d95ff 2px, #0a5ce8 5px, #0553e0 14px, #0262fb 22px, #0363fc 26px, #0346c8); }
.logo { width: 16px; height: 16px; margin: 0 4px 0 0; }
.titlebar h1 { flex: 1; color: #fff; font-size: 13px; line-height: 18px; font-weight: bold; text-shadow: 1px 1px 1px #00217a; white-space: nowrap; overflow: hidden; }
.winbtn { width: 21px; height: 21px; margin-left: 2px; border: 1px solid #fff; border-radius: 3px; background: radial-gradient(circle at 80% 80%, #1d4fe0, #2a62e0 50%, #6f98f2); }
.winbtn svg { width: 18px; height: 18px; }
.winbtn.close { background: radial-gradient(circle at 80% 80%, #d0401c, #dc4f2a 50%, #f09a7c); }
.client { flex: 1; min-height: 0; display: flex; flex-direction: column; background: #f3f3ff; }
.menubar { flex: none; height: 22px; display: flex; align-items: center; gap: 16px; padding: 2px 0 0 6px; background: #f9f9ff; }
.menubar a { color: inherit; text-decoration: none; white-space: nowrap; }
.menubar u { text-underline-offset: 2px; }
.spinner { margin-left: auto; }

.toolbar { flex: none; display: flex; align-items: center; background: linear-gradient(#fbfbff, #f0f0fc); }
.tool { flex: none; width: 20px; height: 20px; display: grid; place-items: center; }
.sep { flex: none; width: 1px; height: 20px; margin: 0 6px 0 4px; background: #b4b4bc; }
.sep:last-child { margin-right: 2px; }
.main-tools { height: 27px; padding: 0 2px 1px; border-top: 1px solid #d2d2e2; border-bottom: 1px solid #c5c5cf; }
.tool-label { margin: 0 4px 0 5px; }
.keep { display: flex; align-items: center; gap: 4px; }
.check { appearance: none; flex: none; width: 13px; height: 13px; border: 1px solid #1c4575; background: #fff; display: grid; place-items: center; }
.check:checked::after { content: ""; width: 5px; height: 8px; margin-top: -2px; border: solid #23a121; border-width: 0 2px 2px 0; transform: rotate(45deg); }
.check:disabled { border-color: #d0d0d8; background: #f7f7fb; }

.combo { display: flex; min-width: 0; height: 20px; }
.combo select, .combo input { appearance: none; flex: 1; min-width: 0; width: 0; height: 20px; padding: 0 3px; border: 1px solid #7f9dbf; background: #f4f4ff; color: #000; opacity: 1; }
.arrow { flex: none; width: 16px; height: 19px; display: grid; place-items: center; border: 1px solid #d5d5e2; border-radius: 2px; background: linear-gradient(#fff, #f0f0f8); color: #ccccd6; }
.arrow svg { width: 10px; height: 8px; }
.combo.active select { background: #fff; }
.combo.active .arrow { border-color: #8aa5cc; background: linear-gradient(#e8efff, #b4c5ec); color: #3f5d8c; }
.year { width: 76px; }
.day { width: 101px; }
.today { width: 148px; margin-left: 5px; }
.date { flex: none; width: 86px; }

/* document tabs */
.workspace { flex: 1; min-height: 0; display: flex; flex-direction: column; margin-left: 1px; padding: 4px 4px 4px 0; border-top: 1px solid #74747c; border-left: 1px solid #74747c; }
.doc-tabs { flex: none; display: flex; align-items: flex-end; gap: 2px; padding-left: 2px; }
.doc-tab { height: 22px; display: flex; align-items: center; gap: 2px; padding: 0 5px 0 8px; border: 1px solid #8ba3c0; border-bottom: 0; border-radius: 2px 2px 0 0; background: #fafaff; }
.doc-tab.current { height: 23px; padding-left: 5px; gap: 3px; border-top: 2px solid #2f6fe8; background: #fff; }
.doc-tab svg:last-child { width: 10px; height: 10px; }
.frame { flex: 1; min-height: 0; display: flex; flex-direction: column; border: 1px solid #8ba3c0; border-left-color: #d9d9e4; }
.sub-tools { height: 22px; padding: 0 0 0 2px; }
.close-doc { width: 24px; }
.close-doc svg { width: 9px; height: 9px; }
.split { flex: 1; min-height: 0; display: flex; gap: 4px; }

/* editor */
.editor { flex: 1; min-width: 0; display: flex; flex-direction: column; padding: 0 4px 3px 0; border: solid #6a6a70; border-width: 1px 0 0 1px; border-right: 1px solid #fff; }
.student { flex: none; display: grid; grid-template-columns: 158px 1fr 1fr 30px; gap: 12px; padding: 5px 3px 0 6px; }
.field { display: flex; flex-direction: column; gap: 5px; min-width: 0; }
.field label { padding-bottom: 1px; }
.sex label, .sex input { text-align: center; }
.class-box { padding-right: 3px; }
.box { min-width: 0; height: 20px; padding: 0 2px; border: 1px solid #7f9dbf; background: #f4f4ff; }
.with-info { display: flex; align-items: center; gap: 4px; }
.info { width: 14px; height: 14px; }
.code { flex: none; width: 40px; }
.second { margin-left: 8px; }
em { font-size: 10px; white-space: nowrap; }
.with-info em { margin-left: 2px; }
.class-note { flex: none; padding: 6px 6px 11px; font-family: "Open Sans", "Noto Sans", sans-serif; font-style: italic; }
.tabs { flex: none; display: flex; align-items: flex-end; gap: 1px; padding-left: 2px; }
.tab { flex: none; height: 22px; padding: 2px 3px 0; border: 1px solid #8ba3c0; border-bottom: 0; border-radius: 2px 2px 0 0; background: #fbfbff; white-space: nowrap; }
.tab.current { height: 23px; padding: 0 3px 3px; border-top: 3px solid #2f6fe8; background: #fff; }
.tab:disabled { color: #b8b8bc; border-color: #d0d0dc; }
.tab-panel { flex: 1; min-height: 0; display: flex; border: 1px solid #8ba3c0; border-left-color: #c5cfdf; }
.sheet { flex: 1; min-width: 0; overflow: hidden; }
.legend { display: flex; align-items: center; gap: 3px; height: 13px; padding: 0 7px 0 6px; font-size: 11px; line-height: 13px; white-space: nowrap; }
.legend::before, .legend::after { content: ""; height: 2px; border-top: 1px solid #a6a6b0; border-bottom: 1px solid #fff; }
.legend::before { width: 9px; }
.legend::after { flex: 1; }
.form { display: grid; grid-template-columns: 146px 1fr 1fr 120px 1fr; gap: 6px 12px; align-items: center; padding: 4px 12px 11px 0; }
.form.arrival { padding-top: 6px; padding-bottom: 12px; }
.form label { text-align: right; white-space: nowrap; }
.wide { grid-column: span 2; }
.contact { display: grid; grid-template-columns: 146px 208px 1fr 315px; gap: 12px; padding: 5px 12px 31px 0; white-space: nowrap; }
.contact span { display: flex; justify-content: flex-end; }

/* grids */
.grid-box { display: flex; min-width: 0; border: solid #a8a8b2; border-width: 1px 0 0 1px; overflow: hidden; }
.grid { flex: 1; min-width: 0; align-self: flex-start; width: 0; table-layout: fixed; border-collapse: separate; border-spacing: 0; }
.grid th { height: 20px; padding: 0 1px; font-weight: normal; text-align: left; white-space: nowrap; overflow: hidden; background: linear-gradient(#c0c0c8, #c0c0c8) right center / 1px 14px no-repeat; }
.grid td { height: 18px; padding: 0 0 0 2px; line-height: 17px; white-space: nowrap; overflow: hidden; }
.hd { display: flex; align-items: center; justify-content: space-between; overflow: hidden; }
.hd b { font-weight: normal; display: flex; align-items: center; margin-left: auto; }
.hd svg { width: 9px; height: 5px; }
.lined thead th { border-bottom: 1px solid #d0d0da; }
.lined td { background: #e7e7f0; border-right: 1px solid #a8a8b2; border-bottom: 1px solid #a8a8b2; }
.lined td:first-child { text-align: right; }
.striped td { border-right: 1px solid #f3f3ff; border-bottom: 1px solid #f3f3ff; background: #e7e7f0; }
.striped tr:nth-child(even) td { background: #ccd9f6; }
.striped tr.selected td { background: #3f7fff; color: #fff; }
.striped tr.selected td.alert { background: #ff0; color: #f00; }
.side { flex: none; width: 18px; display: flex; flex-direction: column; }
.cols { flex: none; width: 17px; height: 21px; display: grid; place-items: center; border: 1px solid #1c4575; border-radius: 2px; background: linear-gradient(#fff, #d4d4e0); }
.cols svg { width: 11px; height: 11px; }
.scroll { flex: 1; min-height: 0; width: 16px; display: flex; flex-direction: column; background: #fbfbff; }
.sb { flex: none; width: 16px; height: 17px; display: grid; place-items: center; border: 1px solid #a9bde0; border-radius: 1px; background: linear-gradient(#eaf0ff, #b6c6ea); color: #3f5d8c; }
.sb svg { width: 10px; height: 8px; }
.sb:last-child:not(:first-child) { margin-top: auto; }
.off .sb { border-color: transparent; background: linear-gradient(#fbfbfd, #ececee); color: #cfcfd4; }
.thumb { flex: none; display: grid; place-items: center; border: 1px solid #8ea8d8; border-radius: 1px; background: linear-gradient(90deg, #e8efff, #b9caf2 50%, #a3b5dd); }
.thumb::after { content: ""; width: 7px; height: 8px; background: repeating-linear-gradient(#f0f5ff 0 1px, #9db2dc 1px 2px); }
.page-scroll { flex: none; }
.page-scroll .thumb { height: 71%; }
.short { height: 71px; }
.tall { height: 89px; }
.contacts { margin: 0 13px; }
.contacts .off { height: 70px; }
.c-nr { width: 25px; } .c-art { width: 190px; } .c-typ { width: 96px; } .c-adr { width: 192px; }

/* navigator */
.navigator { position: relative; flex: none; width: 314px; display: flex; flex-direction: column; padding: 2px 7px 0 6px; border: solid #6a6a70; border-width: 1px 0 0 1px; }
.navigator .legend { padding: 0 0 0 1px; }
.schools { flex: none; height: 101px; margin-top: 4px; background: #e7e7f0; }
.schools thead { background: #f3f3ff; }
.schools th { height: 21px; }
.filter { flex: none; display: flex; align-items: center; height: 22px; margin-top: 4px; }
.filter label { width: 42px; }
.filter + .filter { margin-top: 6px; }
.dim { margin-left: 4px; color: #a0a0a6; }
.push { width: 90px; height: 22px; margin-left: auto; border: 1px solid #1c4575; border-radius: 3px; background: linear-gradient(#fff, #ededf6 60%, #cfcfdc); }
.lists { flex: 1; min-height: 0; display: flex; margin-top: 7px; }
.classes { flex: 140; }
.pupils { flex: 160; }
.k1 { width: 27px; } .k2 { width: 37px; } .k3 { width: 20px; }
.p2 { width: 22px; } .p3 { width: 27px; } .p4 { width: 22px; }
.count { flex: none; height: 19px; line-height: 19px; text-align: center; }
.pager { flex: none; height: 24px; display: flex; align-items: center; justify-content: center; gap: 1px; margin-bottom: 5px; border-top: 1px solid #fff; border-bottom: 1px solid #d5d5e0; }
.highlight { position: absolute; top: -2px; left: 4px; right: 3px; height: 92px; border: 3px solid #f00; box-shadow: 2px 3px 5px #555a, inset 2px 3px 5px #555a; pointer-events: none; }

.status { flex: none; height: 20px; display: flex; background: #f7f7ff; border: 1px solid #7f9dbf; }
.status span { padding: 2px 2px 0; white-space: nowrap; border-right: 2px solid #7f9dbf; }
.status span:last-child { border-right: 0; }
```
